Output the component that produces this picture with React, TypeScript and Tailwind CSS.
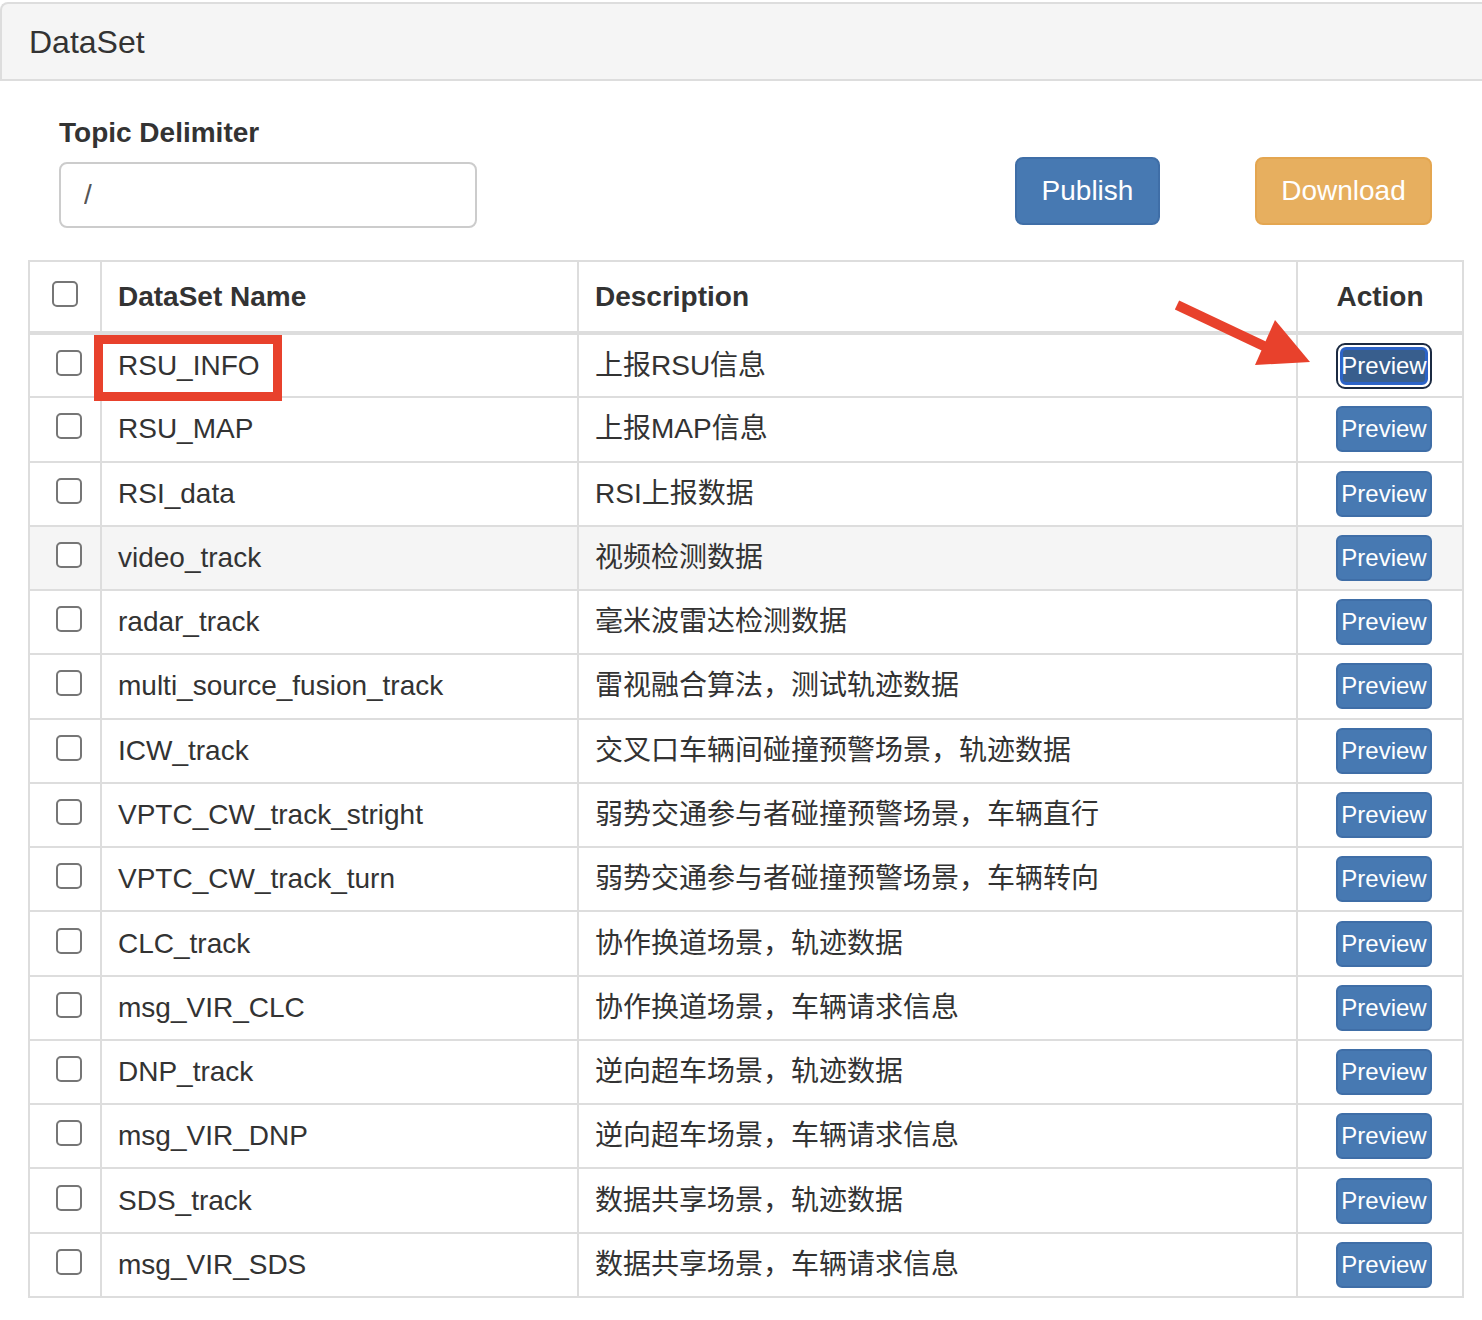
import React from "react";

const rows: [string, string][] = [
  ["RSU_INFO", "上报RSU信息"],
  ["RSU_MAP", "上报MAP信息"],
  ["RSI_data", "RSI上报数据"],
  ["video_track", "视频检测数据"],
  ["radar_track", "毫米波雷达检测数据"],
  ["multi_source_fusion_track", "雷视融合算法，测试轨迹数据"],
  ["ICW_track", "交叉口车辆间碰撞预警场景，轨迹数据"],
  ["VPTC_CW_track_stright", "弱势交通参与者碰撞预警场景，车辆直行"],
  ["VPTC_CW_track_turn", "弱势交通参与者碰撞预警场景，车辆转向"],
  ["CLC_track", "协作换道场景，轨迹数据"],
  ["msg_VIR_CLC", "协作换道场景，车辆请求信息"],
  ["DNP_track", "逆向超车场景，轨迹数据"],
  ["msg_VIR_DNP", "逆向超车场景，车辆请求信息"],
  ["SDS_track", "数据共享场景，轨迹数据"],
  ["msg_VIR_SDS", "数据共享场景，车辆请求信息"],
];

function Checkbox({ className = "" }: { className?: string }) {
  return (
    <span
      className={
        "block w-[26px] h-[26px] border-2 border-[#767676] rounded-[5px] bg-white " +
        className
      }
    />
  );
}

function PreviewButton({ focused }: { focused?: boolean }) {
  if (focused) {
    return (
      <div className="ml-[38px] w-[96px] h-[46px] rounded-[9px] border-2 border-[#1b2a42] bg-white p-[2px]">
        <div className="w-full h-full rounded-[6px] border-[3px] border-[#2c63c7] bg-[#385e8d] text-white text-[24px] leading-none flex items-center justify-center overflow-visible whitespace-nowrap">
          Preview
        </div>
      </div>
    );
  }
  return (
    <div className="ml-[38px] w-[96px] h-[46px] rounded-[6px] border-2 border-[#3f6ea7] bg-[#4779b2] text-white text-[24px] leading-none flex items-center justify-center whitespace-nowrap">
      Preview
    </div>
  );
}

export default function App() {
  return (
    <div className="relative w-[1482px] h-[1320px] bg-white text-[#333] font-['Liberation_Sans','Noto_Sans_CJK_SC',sans-serif]">
      {/* Panel heading */}
      <div className="mt-[2px] h-[79px] border-t-2 border-b-2 border-l-2 border-[#ddd] rounded-tl-[8px] bg-[#f5f5f5] flex items-center pl-[27px]">
        <h3 className="text-[32px] leading-none font-medium">DataSet</h3>
      </div>

      {/* Controls */}
      <div className="flex items-start pl-[59px] pr-[50px]">
        <div className="w-[418px] pt-[32px]">
          <div className="h-[40px] leading-[40px] text-[28px] font-bold">Topic Delimiter</div>
          <input
            readOnly
            value="/"
            className="mt-[9px] w-[418px] h-[66px] border-2 border-[#ccc] rounded-[8px] px-[23px] text-[28px] text-[#555] outline-none bg-white"
          />
        </div>
        <button className="ml-auto mt-[76px] w-[145px] h-[68px] rounded-[8px] border-2 border-[#3f6ea7] bg-[#4779b2] text-white text-[28px]">
          Publish
        </button>
        <button className="ml-[95px] mt-[76px] w-[177px] h-[68px] rounded-[8px] border-2 border-[#e4a650] bg-[#e7af5f] text-white text-[28px]">
          Download
        </button>
      </div>

      {/* Table */}
      <table className="mt-[32px] ml-[28px] w-[1434px] table-fixed border-collapse border-2 border-[#ddd] text-[28px]">
        <colgroup>
          <col className="w-[72px]" />
          <col className="w-[477px]" />
          <col className="w-[719px]" />
          <col className="w-[166px]" />
        </colgroup>
        <thead>
          <tr className="h-[72px]">
            <th className="border-2 border-b-4 border-[#ddd] align-middle">
              <Checkbox className="ml-[22px] -mt-[6px]" />
            </th>
            <th className="border-2 border-b-4 border-[#ddd] text-left pl-[16px] font-bold align-middle">
              DataSet Name
            </th>
            <th className="border-2 border-b-4 border-[#ddd] text-left pl-[16px] font-bold align-middle">
              Description
            </th>
            <th className="border-2 border-b-4 border-[#ddd] text-center font-bold align-middle">
              Action
            </th>
          </tr>
        </thead>
        <tbody>
          {rows.map(([name, desc], i) => (
            <tr key={name} className={"h-[64.27px] " + (i === 3 ? "bg-[#f5f5f5]" : "")}>
              <td className="border-2 border-[#ddd] align-middle">
                <Checkbox className="ml-[26px] -mt-[6px]" />
              </td>
              <td className="border-2 border-[#ddd] pl-[16px] align-middle whitespace-nowrap">{name}</td>
              <td className="border-2 border-[#ddd] pl-[16px] align-middle whitespace-nowrap">{desc}</td>
              <td className="border-2 border-[#ddd] align-middle">
                <PreviewButton focused={i === 0} />
              </td>
            </tr>
          ))}
        </tbody>
      </table>

      {/* Annotation: red box */}
      <div className="absolute left-[94px] top-[333px] w-[188px] h-[66px] border-[9px] border-[#e8412c] pointer-events-none" />

      {/* Annotation: red arrow */}
      <svg
        className="absolute left-[1170px] top-[295px] pointer-events-none"
        width="150"
        height="75"
        viewBox="0 0 150 75"
      >
        <line x1="7" y1="8" x2="98" y2="51" stroke="#e8412c" strokeWidth="10" />
        <polygon points="105,23 85,68 140,65" fill="#e8412c" />
      </svg>
    </div>
  );
}
